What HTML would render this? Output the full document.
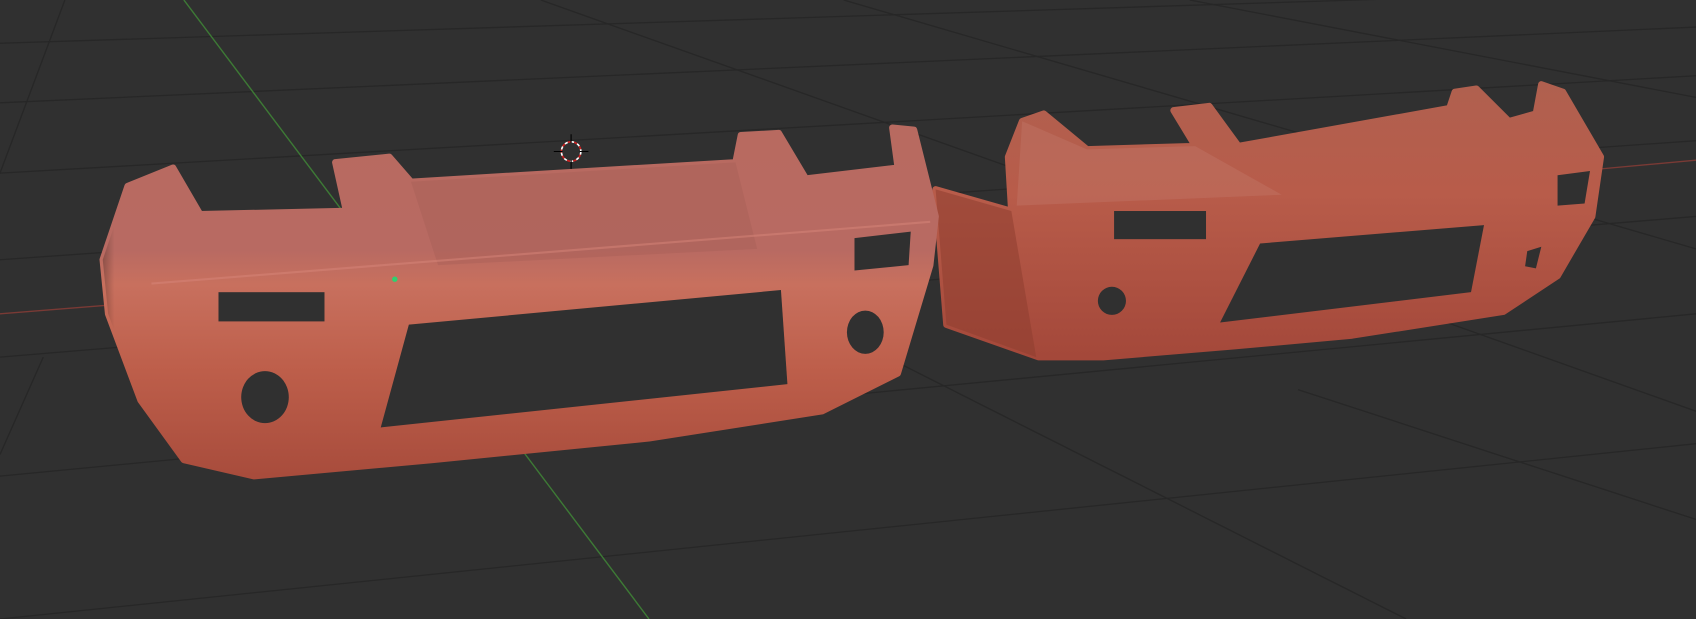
<!DOCTYPE html>
<html><head><meta charset="utf-8"><style>html,body{margin:0;padding:0;background:#303030;overflow:hidden}svg{display:block}</style></head>
<body>
<svg width="1696" height="619" viewBox="0 0 1568 572" preserveAspectRatio="none" xmlns="http://www.w3.org/2000/svg">
<defs>
<linearGradient id="gl" x1="0" y1="0" x2="0" y2="1">
<stop offset="0" stop-color="#b86a60"/><stop offset="0.35" stop-color="#b86a62"/><stop offset="0.45" stop-color="#c8705e"/><stop offset="0.7" stop-color="#bd5e4a"/><stop offset="1" stop-color="#a84c3c"/></linearGradient>
<linearGradient id="gr" x1="0" y1="0" x2="0" y2="1">
<stop offset="0" stop-color="#b0604f"/><stop offset="0.4" stop-color="#b85c4a"/><stop offset="1" stop-color="#a4483a"/></linearGradient>
<linearGradient id="side" x1="0" y1="0" x2="1" y2="0">
<stop offset="0" stop-color="#000" stop-opacity="0.25"/><stop offset="0.12" stop-color="#000" stop-opacity="0"/><stop offset="1" stop-color="#000" stop-opacity="0"/></linearGradient>
</defs>
<rect width="1568" height="572" fill="#303030"/>
<g stroke="#272727" stroke-width="1.2" fill="none">
<path d="M0 40 L1568 -10"/><path d="M0 95 L1568 25"/><path d="M0 160 L1568 70"/><path d="M0 240 L1568 130"/>
<path d="M0 330 L1568 200"/><path d="M0 440 L1568 290"/><path d="M0 572 L1568 410"/>
<path d="M60 0 L0 160"/><path d="M780 0 L1568 230"/><path d="M500 0 L1568 380"/>
<path d="M1100 0 L1568 90"/><path d="M820 330 L1300 572"/><path d="M1200 360 L1568 480"/><path d="M40 330 L0 420"/>
</g>
<path d="M170 0 L600 572" stroke="#3d7a35" stroke-width="1.3"/>
<path d="M0 290 L100 282" stroke="#7a3a35" stroke-width="1.2"/>
<path d="M1470 157 L1568 148" stroke="#7a3a35" stroke-width="1.2"/>
<!-- right bumper -->
<path d="M865 175 L935 195 L932 145 L945 112 L965 105 L1005 138 L1105 135 L1085 102 L1118 98 L1145 135 L1340 100 L1345 85 L1365 82 L1395 112 L1420 105 L1425 78 L1445 85 L1480 145 L1472 200 L1440 255 L1390 288 L1250 310 L1140 320 L1020 330 L960 330 L875 300 Z" fill="url(#gr)" stroke="url(#gr)" stroke-width="6" stroke-linejoin="round"/>
<path d="M865 175 L935 195 L958 330 L875 300 Z" fill="#8e3e30" opacity="0.55"/>
<path d="M945 112 L1005 138 L1105 135 L1185 180 L940 190 Z" fill="#c88074" opacity="0.3"/>
<rect x="1030" y="195" width="85" height="26" fill="#303030"/>
<path d="M1165 225 L1372 208 L1360 270 L1128 298 Z" fill="#303030"/>
<circle cx="1028" cy="278" r="13" fill="#303030"/>
<path d="M1440 162 L1470 158 L1465 188 L1440 190 Z" fill="#303030"/>
<path d="M1412 232 L1425 228 L1420 248 L1410 246 Z" fill="#303030"/>
<!-- left bumper -->
<path d="M95 240 L118 172 L160 155 L185 198 L320 195 L310 150 L360 145 L380 168 L680 150 L685 125 L720 123 L745 165 L830 155 L825 118 L845 120 L865 200 L860 245 L830 345 L760 380 L600 405 L400 425 L235 440 L170 425 L130 370 L100 290 Z" fill="url(#gl)" stroke="url(#gl)" stroke-width="6" stroke-linejoin="round"/>
<path d="M95 240 L118 172 L160 155 L185 198 L160 440 L130 370 L100 290 Z" fill="url(#side)"/>
<path d="M380 168 L680 150 L700 230 L405 245 Z" fill="#a05a52" opacity="0.3"/>
<rect x="202" y="270" width="98" height="27" fill="#303030"/>
<path d="M790 220 L842 214 L840 245 L790 250 Z" fill="#303030"/>
<path d="M378 300 L722 268 L728 355 L352 395 Z" fill="#303030"/>
<ellipse cx="245" cy="367" rx="22" ry="24" fill="#303030"/>
<ellipse cx="800" cy="307" rx="17" ry="20" fill="#303030"/>
<path d="M140 262 Q500 235 860 205" stroke="#d8857a" stroke-width="2" fill="none" opacity="0.5"/>
<circle cx="365" cy="258" r="2.5" fill="#2fd070"/>
<circle cx="528" cy="140" r="9" fill="none" stroke="#fff" stroke-width="1.5" stroke-dasharray="3 3"/>
<circle cx="528" cy="140" r="9" fill="none" stroke="#d02020" stroke-width="1.5" stroke-dasharray="3 3" stroke-dashoffset="3"/>
<path d="M528 124 V132 M528 148 V156 M512 140 H520 M536 140 H544" stroke="#000" stroke-width="1"/>
</svg>
</body></html>
